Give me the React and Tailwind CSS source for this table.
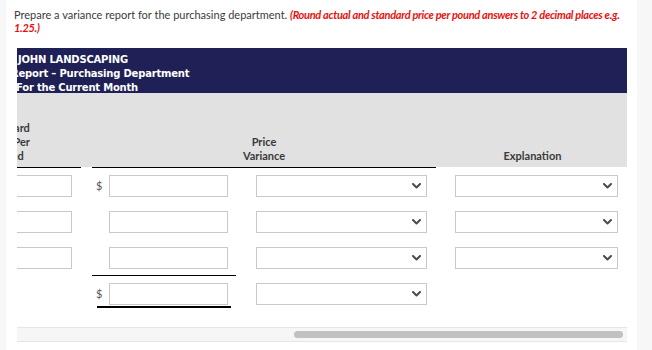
const lato = { fontFamily: "Lato, 'Open Sans', sans-serif" };

function TextInput({ className = "" }) {
  return (
    <div
      className={`h-[22px] border border-[#c9c9c9] bg-white shrink-0 ${className}`}
    />
  );
}

function Dropdown({ className = "" }) {
  return (
    <div
      className={`h-[22px] border border-[#c9c9c9] bg-white shrink-0 flex items-center justify-end pr-[5px] ${className}`}
    >
      <svg width="9" height="6" viewBox="0 0 9 6" fill="none">
        <path
          d="M1 1l3.5 3.5L8 1"
          stroke="#4a4a4a"
          strokeWidth="2"
          strokeLinecap="round"
          strokeLinejoin="round"
        />
      </svg>
    </div>
  );
}

// one body row of the report grid
function ReportRow({ first, dollar, amount, underline, total, explain }) {
  return (
    <div className="flex h-[36px] pt-[7px]">
      {/* standard price column, scrolled partly out of view */}
      <div className="w-[64px] shrink-0 overflow-hidden">
        {first && <TextInput className="w-[70px] -ml-[15px]" />}
      </div>
      <div className="w-[11px] shrink-0" />
      {/* amount column */}
      <div
        className={`w-[144px] shrink-0 h-[29px] ${
          underline ? "border-b border-black" : ""
        }`}
      >
        {amount && (
          <div className="flex items-start">
            <span
              className="w-[17px] pl-[4px] text-[11px] leading-[22px] text-[#555]"
              style={lato}
            >
              {dollar ? "$" : ""}
            </span>
            <div
              className={`w-[124px] ${
                total ? "border-b-2 border-black pb-[1px] -ml-[12px] pl-[12px] w-[134px]" : ""
              }`}
            >
              <TextInput className="w-[119px]" />
            </div>
          </div>
        )}
      </div>
      {/* price variance select */}
      <div className="w-[200px] shrink-0 pl-[20px]">
        <Dropdown className="w-[171px]" />
      </div>
      {/* explanation select */}
      <div className="w-[191px] shrink-0 pl-[19px]">
        {explain && <Dropdown className="w-[163px]" />}
      </div>
    </div>
  );
}

export default function App() {
  return (
    <div className="w-[652px] h-[350px] bg-[#f7f7f7] overflow-hidden">
      <div className="ml-[6px] w-[631px] h-[350px] bg-white">
        {/* instructions */}
        <p
          className="pl-[8px] pt-[8px] text-[11px] leading-[13px] text-[#3b3b3b] whitespace-nowrap"
          style={lato}
        >
          Prepare a variance report for the purchasing department.{" "}
          <span className="text-[#e8100f] font-bold italic tracking-[-0.3px]">
            (Round actual and standard price per pound answers to 2 decimal
            places e.g.
            <br />
            1.25.)
          </span>
        </p>

        {/* report table, scrolled horizontally */}
        <div className="ml-[11px] mt-[14px] w-[610px] overflow-hidden">
          <div
            className="h-[45px] bg-[#1f2056] text-white text-[10px] font-bold leading-[14px] pt-[5px] tracking-[-0.2px]"
            style={{ fontFamily: "'DejaVu Sans', Verdana, sans-serif" }}
          >
            <div className="ml-[1px] whitespace-nowrap">JOHN LANDSCAPING</div>
            <div className="-ml-[6px] whitespace-nowrap">
              Report – Purchasing Department
            </div>
            <div className="-ml-[1px] whitespace-nowrap">For the Current Month</div>
          </div>

          {/* column headings */}
          <div
            className="flex h-[75px] text-[11px] font-bold leading-[14px] text-[#3a3a3a]"
            style={lato}
          >
            <div className="w-[64px] shrink-0 bg-[#e1e1e1] flex flex-col justify-end border-b-[1.5px] border-black pb-[4px] overflow-hidden">
              <div className="w-[60px] -ml-[39px] text-center">
                Standard
                <br />
                Price Per
                <br />
                Pound
              </div>
            </div>
            <div className="w-[11px] shrink-0 bg-[#e1e1e1] h-[74px]" />
            <div className="w-[344px] shrink-0 bg-[#e1e1e1] flex flex-col justify-end items-center border-b-[1.5px] border-black pb-[4px]">
              <div className="text-center">
                Price
                <br />
                Variance
              </div>
            </div>
            <div className="w-[191px] shrink-0 bg-[#e1e1e1] h-[74px] flex flex-col justify-end items-center pb-[4px]">
              <div className="text-center pl-[2px]">Explanation</div>
            </div>
          </div>

          <ReportRow first dollar amount explain />
          <ReportRow first amount explain />
          <ReportRow first amount underline explain />
          <ReportRow dollar amount total />

          {/* horizontal scrollbar */}
          <div className="mt-[15px] h-[15px] bg-[#f6f6f6] border-y border-[#e6e6e6] flex items-center">
            <div className="ml-[277px] w-[329px] h-[7px] rounded-full bg-[#c1c1c1]" />
          </div>
        </div>
      </div>
    </div>
  );
}
